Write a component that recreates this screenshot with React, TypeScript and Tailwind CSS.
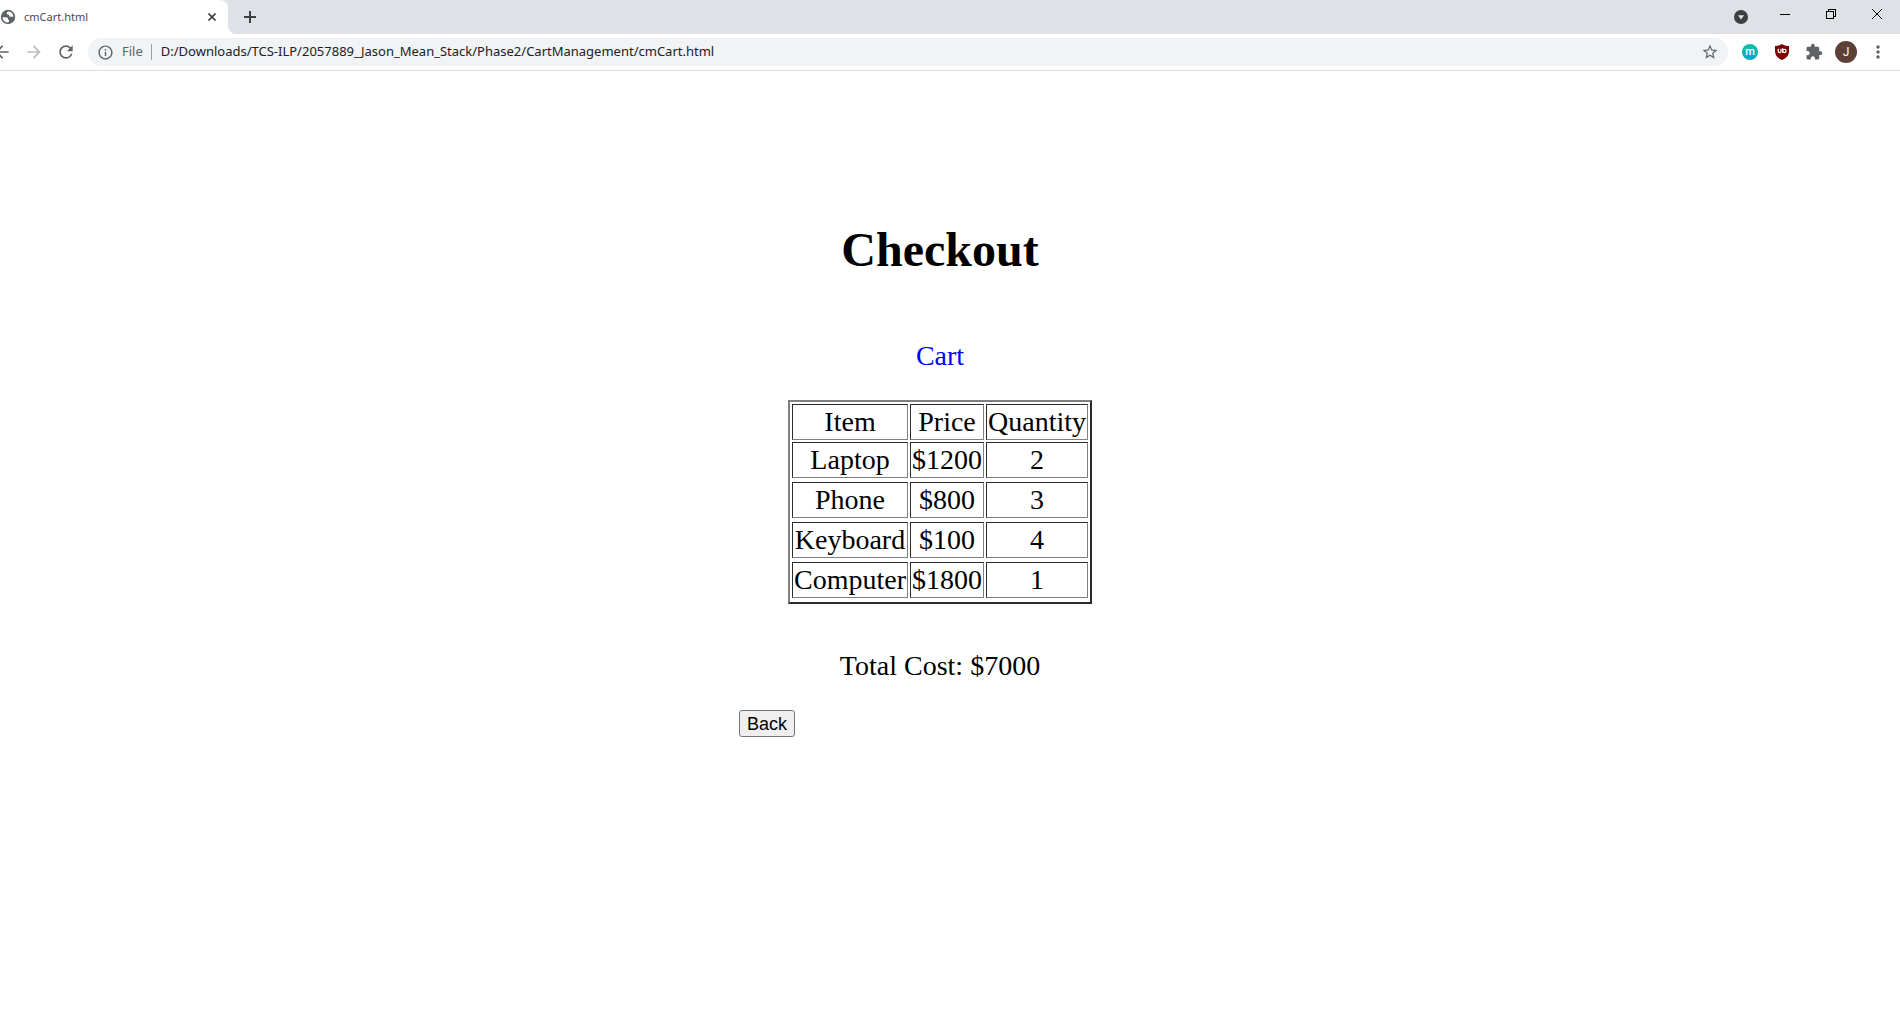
import type { ReactNode } from "react";
import {
  MdArrowBack,
  MdArrowForward,
  MdExtension,
  MdInfoOutline,
  MdMoreVert,
  MdRefresh,
  MdStarBorder,
} from "react-icons/md";

const items = [
  { name: "Laptop", price: 1200, quantity: 2 },
  { name: "Phone", price: 800, quantity: 3 },
  { name: "Keyboard", price: 100, quantity: 4 },
  { name: "Computer", price: 1800, quantity: 1 },
];

const total = items.reduce((sum, item) => sum + item.price * item.quantity, 0);

function GlobeIcon() {
  return (
    <svg viewBox="0 0 16 16" className="size-4 shrink-0" aria-hidden="true">
      <circle cx="8" cy="8" r="7.2" fill="#5f6368" />
      <path
        d="M2.500 8.200h3.500c1.300 0 2 .7 2 1.800 0 .6.4.9 1 .9v1.600c-.3.6-.8.9-1.500.9C4.700 13.200 2.600 11 2.500 8.200z"
        fill="#fff"
      />
      <path
        d="M8.800 2.600c-1.200.2-2 .8-2 1.700 0 .8.6 1.200 1.400 1.200.8 0 1 .5 1 1.100 0 .8.6 1.200 1.500 1.200h2.600c0-2.800-1.900-4.800-4.500-5.200z"
        fill="#fff"
      />
    </svg>
  );
}

function TabStrip() {
  return (
    <div className="flex h-[34px] items-stretch bg-[#dee1e6]">
      <div className="flex w-[228px] items-center rounded-tr-lg bg-white pr-2">
        <GlobeIcon />
        <span className="ml-2 flex-1 text-[11px] text-[#45494d]">cmCart.html</span>
        <button type="button" aria-label="Close tab" className="flex size-4 items-center justify-center">
          <svg viewBox="0 0 8 8" className="size-2" aria-hidden="true">
            <path d="M0.500 0.500l7 7M7.500 0.500l-7 7" stroke="#3c4043" strokeWidth="1.600" />
          </svg>
        </button>
      </div>
      <div className="size-2 self-end bg-white">
        <div className="size-2 rounded-bl-lg bg-[#dee1e6]" />
      </div>
      <button type="button" aria-label="New tab" className="ml-1 flex w-5 items-center justify-center">
        <svg viewBox="0 0 12 12" className="size-3" aria-hidden="true">
          <path d="M6 0v12M0 6h12" stroke="#3c4043" strokeWidth="2" />
        </svg>
      </button>
      <div className="ml-auto flex h-7 items-center">
        <button type="button" aria-label="Search tabs" className="flex w-10 items-center justify-center pt-[5px]">
          <svg viewBox="0 0 14 14" className="size-[14px]" aria-hidden="true">
            <circle cx="7" cy="7" r="7" fill="#3c4043" />
            <path d="M4 5.200h6L7 9.500z" fill="#dee1e6" />
          </svg>
        </button>
        <button type="button" aria-label="Minimize" className="ml-px flex w-[46px] items-center justify-center">
          <svg viewBox="0 0 10 10" className="size-[10px]" shapeRendering="crispEdges" aria-hidden="true">
            <path d="M0 5.500h10" stroke="#000" />
          </svg>
        </button>
        <button type="button" aria-label="Restore" className="flex w-[46px] items-center justify-center">
          <svg viewBox="0 0 10 10" className="size-[10px]" fill="none" stroke="#000" shapeRendering="crispEdges" aria-hidden="true">
            <path d="M0.500 2.500h7v7h-7zM2.500 2.500v-2h7v7h-2" />
          </svg>
        </button>
        <button type="button" aria-label="Close" className="flex w-[46px] items-center justify-center">
          <svg viewBox="0 0 10 10" className="size-[10px]" aria-hidden="true">
            <path d="M0 0l10 10M10 0L0 10" stroke="#000" />
          </svg>
        </button>
      </div>
    </div>
  );
}

function Toolbar() {
  return (
    <div className="flex h-[37px] items-center border-b border-[#dadce0] bg-white pr-3 text-[#5f6368]">
      <div className="-ml-2 flex gap-3">
        <button type="button" aria-label="Back">
          <MdArrowBack className="size-5" />
        </button>
        <button type="button" aria-label="Forward" className="text-[#babcbe]">
          <MdArrowForward className="size-5" />
        </button>
        <button type="button" aria-label="Reload">
          <MdRefresh className="size-5" />
        </button>
      </div>
      <div className="ml-3 flex h-7 flex-1 items-center rounded-full bg-[#f1f3f4] pr-[9px] pl-[9px] text-[13px]">
        <MdInfoOutline className="size-[17px]" />
        <span className="ml-2">File</span>
        <span className="ml-2 h-4 w-px bg-[#9aa0a6]" />
        <input
          aria-label="Address"
          className="ml-[9px] min-w-0 flex-1 bg-transparent text-[#202124] outline-none"
          defaultValue="D:/Downloads/TCS-ILP/2057889_Jason_Mean_Stack/Phase2/CartManagement/cmCart.html"
        />
        <button type="button" aria-label="Bookmark this page">
          <MdStarBorder className="size-[18px]" />
        </button>
      </div>
      <div className="ml-3 flex items-center gap-3">
        <button
          type="button"
          aria-label="Extension m"
          className="mx-[2px] flex size-4 items-center justify-center rounded-full bg-linear-to-b from-[#10bfa5] to-[#12a5cf] font-[Roboto] text-[11px] leading-none font-medium text-white"
        >
          <span className="-mt-px">m</span>
        </button>
        <button type="button" aria-label="uBlock Origin" className="flex w-5 justify-center">
          <svg viewBox="0 0 16 16" className="size-4" aria-hidden="true">
            <path d="M8 0c2 1.400 4.300 2 7 2v5c0 4.500-2.500 7-7 9-4.500-2-7-4.500-7-9V2c2.700 0 5-.6 7-2z" fill="#800000" />
            <path d="M4.200 4.800v2.400a1.400 1.400 0 0 0 2.800 0V4.800M8.600 4.200v4.600" fill="none" stroke="#fff" strokeWidth="1.200" />
            <circle cx="10.400" cy="7" r="1.700" fill="none" stroke="#fff" strokeWidth="1.200" />
          </svg>
        </button>
        <button type="button" aria-label="Extensions">
          <MdExtension className="size-5 p-px" />
        </button>
        <button
          type="button"
          aria-label="Profile J"
          className="-mx-px flex size-[22px] items-center justify-center rounded-full bg-[#5d4037] font-[Roboto] text-xs text-white"
        >
          J
        </button>
        <button type="button" aria-label="Menu">
          <MdMoreVert className="size-5" />
        </button>
      </div>
    </div>
  );
}

function Cell({ children }: { children: ReactNode }) {
  return (
    <td className="border border-t-[#2c2c2c] border-r-[#808080] border-b-[#808080] border-l-[#2c2c2c] p-px">
      {children}
    </td>
  );
}

function CartTable() {
  return (
    <table
      aria-labelledby="cart-title"
      className="mx-auto border-separate border-spacing-[2px] border-2 border-t-[#808080] border-r-[#2c2c2c] border-b-[#2c2c2c] border-l-[#808080] text-center"
    >
      <thead>
        <tr>
          <Cell>Item</Cell>
          <Cell>Price</Cell>
          <Cell>Quantity</Cell>
        </tr>
      </thead>
      <tbody>
        {items.map((item) => [
          <tr key={item.name}>
            <Cell>{item.name}</Cell>
            <Cell>${item.price}</Cell>
            <Cell>{item.quantity}</Cell>
          </tr>,
          <tr key={item.name + "-gap"} />,
        ])}
      </tbody>
    </table>
  );
}

export default function App() {
  return (
    <div className="min-h-screen bg-white font-['Noto_Sans',sans-serif]">
      <header>
        <TabStrip />
        <Toolbar />
      </header>
      <main className="pt-[151px] pr-5 font-['Liberation_Serif',serif] text-[28px] leading-8 text-black">
        <div className="mx-auto max-w-[402px]">
          <h1 className="text-center text-5xl leading-[56px] font-bold">Checkout</h1>
          <p id="cart-title" className="mt-[62px] text-center text-[#0000ff]">
            Cart
          </p>
          <div className="mt-7">
            <CartTable />
          </div>
          <p className="mt-[46px] text-center">Total Cost: ${total}</p>
          <button
            type="button"
            className="mt-7 block h-[27px] rounded-[3px] border border-[#767676] bg-[#efefef] px-[7px] font-['Liberation_Sans',sans-serif] text-lg leading-none"
          >
            Back
          </button>
        </div>
      </main>
    </div>
  );
}
